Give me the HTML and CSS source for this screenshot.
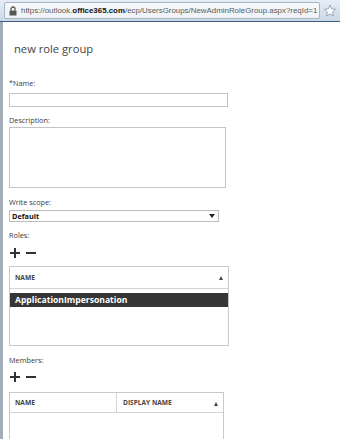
FILE: index.html
```html
<!DOCTYPE html>
<html>
<head>
<meta charset="utf-8">
<link rel="stylesheet" href="styles.css">
</head>
<body>
<div class="addr">
  <div class="field">
    <svg class="lock" width="8" height="10" viewBox="0 0 8 10"><path d="M2 4.5V3a2 2 0 0 1 4 0v1.5" fill="none" stroke="#555" stroke-width="1.3"/><rect x="0.5" y="4.5" width="7" height="5" rx="0.5" fill="#555"/></svg>
    <span class="url">https://outlook.<b>office365.com</b>/ecp/UsersGroups/NewAdminRoleGroup.aspx?reqId=1</span>
  </div>
  <svg class="star" width="14" height="14" viewBox="0 0 14 14"><path d="M7 1.2l1.7 3.6 3.9.5-2.9 2.7.8 3.9L7 10l-3.5 1.9.8-3.9L1.4 5.3l3.9-.5z" fill="#fff" stroke="#8a9bb0" stroke-width="0.9" stroke-linejoin="round"/></svg>
</div>
<div class="page">
  <h1 class="title">new role group</h1>
  <div class="label lbl-name">*Name:</div>
  <div class="input"></div>
  <div class="label lbl-desc">Description:</div>
  <div class="textarea"></div>
  <div class="label lbl-scope">Write scope:</div>
  <div class="select"><span>Default</span><span class="arrow"></span></div>
  <div class="label lbl-roles">Roles:</div>
  <div class="tools"><span class="plus"></span><span class="minus"></span></div>
  <div class="table roles">
    <div class="thead"><span class="col">NAME</span><span class="sort"></span></div>
    <div class="row sel">ApplicationImpersonation</div>
  </div>
  <div class="label lbl-members">Members:</div>
  <div class="tools tools-m"><span class="plus"></span><span class="minus"></span></div>
  <div class="table members">
    <div class="thead"><span class="col c1">NAME</span><span class="col c2">DISPLAY NAME</span><span class="sort"></span></div>
  </div>
</div>
</body>
</html>
```
FILE: styles.css
```css
html, body { margin: 0; padding: 0; background: #fff; }
body { width: 340px; height: 440px; overflow: hidden; font-family: "Open Sans", "Noto Sans", sans-serif; color: #333; }
.addr { height: 22px; box-sizing: border-box; background: linear-gradient(#e6edf5, #cbd8e6); border-bottom: 1px solid #3d5c84; display: flex; align-items: center; padding: 0 3px 0 4px; gap: 3px; }
.field { flex: 1; height: 17px; box-sizing: border-box; background: linear-gradient(#f7f9fb, #eef2f6); border: 1px solid #a7b6c8; border-radius: 2px; display: flex; align-items: center; padding-left: 4px; gap: 4px; overflow: hidden; }
.lock { flex: none; }
.url { font-family: "Liberation Sans", sans-serif; font-size: 7.9px; color: #5a5a5a; white-space: nowrap; }
.url b { color: #111; }
.star { flex: none; }
.page { border-left: 3px solid #a3adb9; padding-left: 6px; height: 417px; box-sizing: border-box; overflow: hidden; }
.title { margin: 0; padding-top: 19px; font-weight: 400; font-size: 11.2px; line-height: 16px; color: #444; padding-left: 5px; }
.label { font-size: 7.3px; line-height: 10px; color: #3a3a3a; }
.lbl-name { margin-top: 21px; }
.input { margin-top: 5px; width: 219px; height: 14px; box-sizing: border-box; border: 1px solid #c4c4c4; }
.lbl-desc { margin-top: 8px; }
.textarea { margin-top: 2px; width: 217px; height: 61px; box-sizing: border-box; border: 1px solid #c4c4c4; }
.lbl-scope { margin-top: 9px; }
.select { margin-top: 3px; width: 210px; height: 12px; box-sizing: border-box; border: 1px solid #bdbdbd; display: flex; align-items: center; justify-content: space-between; padding: 0 3px 0 2px; font-size: 7.3px; font-weight: 700; color: #111; }
.arrow { width: 0; height: 0; border-left: 3px solid transparent; border-right: 3px solid transparent; border-top: 4px solid #222; }
.lbl-roles { margin-top: 8px; }
.tools { margin-top: 6px; height: 13px; display: flex; align-items: center; gap: 6px; padding-left: 1px; }
.plus, .minus { position: relative; width: 10px; height: 10px; }
.plus::before, .minus::before { content: ""; position: absolute; left: 0; top: 4px; width: 10px; height: 2px; background: #333; }
.plus::after { content: ""; position: absolute; left: 4px; top: 0; width: 2px; height: 10px; background: #333; }
.table { margin-top: 7px; box-sizing: border-box; border: 1px solid #c9c9c9; }
.roles { width: 220px; height: 80px; }
.lbl-members { margin-top: 9px; }
.tools-m { margin-top: 5px; }
.members { width: 215px; height: 60px; margin-top: 9px; border-bottom: none; }
.thead { height: 21px; border-bottom: 1px solid #d4d4d4; display: flex; align-items: center; position: relative; font-size: 6.6px; font-weight: 700; color: #444; }
.thead .col { padding-left: 5px; }
.sort { position: absolute; right: 5px; top: 9px; width: 0; height: 0; border-left: 2.5px solid transparent; border-right: 2.5px solid transparent; border-bottom: 4px solid #444; }
.row.sel { margin-top: 4px; height: 14px; background: #363636; color: #fff; font-size: 8.6px; font-weight: 700; line-height: 14px; padding-left: 5px; }
.members .thead { height: 19px; }
.members .c1 { width: 107px; box-sizing: border-box; align-self: stretch; display: flex; align-items: center; border-right: 1px solid #d4d4d4; }
.members .c2 { padding-left: 6px; }
```
